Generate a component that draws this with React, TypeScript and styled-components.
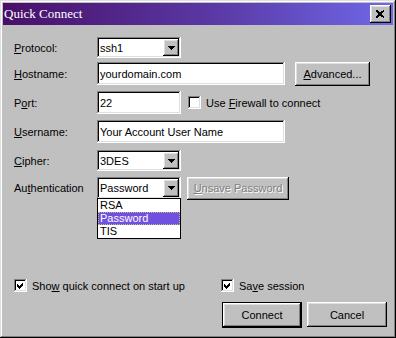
import React from 'react';
import styled, { css, createGlobalStyle } from 'styled-components';

const GlobalStyle = createGlobalStyle`
  body {
    margin: 0;
    background: #c0c0c0;
  }
`;

const raised = css`
  box-shadow: inset -1px -1px #000, inset 1px 1px #fff, inset -2px -2px #808080, inset 2px 2px #dfdfdf;
`;

const sunken = css`
  box-shadow: inset -1px -1px #fff, inset 1px 1px #808080, inset -2px -2px #dfdfdf, inset 2px 2px #000;
`;

function Check() {
  return (
    <svg width="13" height="13" viewBox="0 0 13 13" shapeRendering="crispEdges">
      <polygon points="3,5 5,7 9,3 9,6 5,10 3,8" fill="#000" />
    </svg>
  );
}

function Arrow() {
  return (
    <svg width="7" height="4" viewBox="0 0 7 4" shapeRendering="crispEdges">
      <polygon points="0,0 7,0 3.5,4" fill="#000" />
    </svg>
  );
}

function Select({ value, children }: { value: string; children?: React.ReactNode }) {
  return (
    <SelectBox>
      <span>{value}</span>
      <ArrowBtn>
        <Arrow />
      </ArrowBtn>
      {children}
    </SelectBox>
  );
}

function CheckBox({ checked, children }: { checked?: boolean; children: React.ReactNode }) {
  return (
    <CheckLabel>
      <Box>{checked && <Check />}</Box>
      <span>{children}</span>
    </CheckLabel>
  );
}

function App() {
  return (
    <>
      <GlobalStyle />
      <Window>
        <TitleBar>
          <span>Quick Connect</span>
          <CloseBtn>
            <svg width="9" height="8" viewBox="0 0 9 8" shapeRendering="crispEdges">
              <path d="M0.5 0.5 L8 7.5 M8 0.5 L0.5 7.5" stroke="#000" strokeWidth="2" />
            </svg>
          </CloseBtn>
        </TitleBar>

        <Body>
          <Row $h={21} $mt={12}>
            <Label><U>P</U>rotocol:</Label>
            <Select value="ssh1" />
          </Row>
          <Row $h={23} $mt={4}>
            <Label><U>H</U>ostname:</Label>
            <Field $w={188}>yourdomain.com</Field>
            <Button $w={75} $h={24} $ml={10}><U>A</U>dvanced...</Button>
          </Row>
          <Row $h={23} $mt={6}>
            <Label>P<U>o</U>rt:</Label>
            <Field $w={84}>22</Field>
            <Spacer $w={7} />
            <CheckBox>Use <U>F</U>irewall to connect</CheckBox>
          </Row>
          <Row $h={23} $mt={6}>
            <Label><U>U</U>sername:</Label>
            <Field $w={188}>Your Account User Name</Field>
          </Row>
          <Row $h={21} $mt={7}>
            <Label><U>C</U>ipher:</Label>
            <Select value="3DES" />
          </Row>
          <Row $h={22} $mt={6}>
            <Label>Au<U>t</U>hentication</Label>
            <Select value="Password">
              <List>
                <Item>RSA</Item>
                <Item $active>Password</Item>
                <Item>TIS</Item>
              </List>
            </Select>
            <Button $w={102} $h={23} $ml={6} disabled>
              <U>U</U>nsave Password
            </Button>
          </Row>

          <Checks>
            <CheckBox checked>Sho<U>w</U> quick connect on start up</CheckBox>
            <CheckBox checked>Sa<U>v</U>e session</CheckBox>
          </Checks>

          <Actions>
            <Button $w={80} $h={26} $default>Connect</Button>
            <Button $w={80} $h={25}>Cancel</Button>
          </Actions>
        </Body>
      </Window>
    </>
  );
}

const Window = styled.div`
  width: 396px;
  height: 338px;
  box-sizing: border-box;
  padding: 3px;
  background: #c0c0c0;
  box-shadow: inset -1px -1px #000, inset 1px 1px #dfdfdf, inset -2px -2px #808080, inset 2px 2px #fff;
  display: flex;
  flex-direction: column;
  font-family: "Liberation Sans", Arial, sans-serif;
  font-size: 11px;
  color: #000;
`;

const TitleBar = styled.div`
  height: 22px;
  flex: none;
  display: flex;
  align-items: center;
  justify-content: space-between;
  padding: 0 2px 0 1px;
  background: linear-gradient(to right, #480f68, #5a3aa6 55%, #7068e8);
  color: #fff;
  font-family: "Liberation Serif", "Times New Roman", serif;
  font-size: 13px;
`;

const CloseBtn = styled.div`
  width: 21px;
  height: 18px;
  display: flex;
  align-items: center;
  justify-content: center;
  background: #c0c0c0;
  ${raised};
`;

const Body = styled.div`
  flex: 1;
  display: flex;
  flex-direction: column;
  padding: 0 6px 0 11px;
`;

const Row = styled.div<{ $h: number; $mt: number }>`
  display: flex;
  align-items: center;
  height: ${({ $h }) => $h}px;
  margin-top: ${({ $mt }) => $mt}px;
`;

const Label = styled.div`
  width: 83px;
  flex: none;
`;

const U = styled.span`
  text-decoration: underline;
`;

const Spacer = styled.div<{ $w: number }>`
  width: ${({ $w }) => $w}px;
  flex: none;
`;

const Field = styled.div<{ $w: number }>`
  width: ${({ $w }) => $w}px;
  height: 100%;
  box-sizing: border-box;
  display: flex;
  align-items: center;
  padding-left: 3px;
  background: #fff;
  ${sunken};
`;

const SelectBox = styled.div`
  position: relative;
  width: 84px;
  height: 100%;
  box-sizing: border-box;
  display: flex;
  align-items: center;
  justify-content: space-between;
  padding: 2px 2px 2px 3px;
  background: #fff;
  ${sunken};
`;

const ArrowBtn = styled.div`
  width: 16px;
  height: 100%;
  display: flex;
  align-items: center;
  justify-content: center;
  background: #c0c0c0;
  ${raised};
`;

const List = styled.div`
  position: absolute;
  top: calc(100% - 1px);
  left: 0;
  width: 84px;
  box-sizing: border-box;
  border: 1px solid #000;
  background: #fff;
  z-index: 2;
`;

const Item = styled.div<{ $active?: boolean }>`
  height: 13px;
  line-height: 13px;
  padding-left: 2px;
  box-sizing: border-box;
  ${({ $active }) =>
    $active &&
    css`
      background: #7050e0;
      color: #fff;
      outline: 1px dotted #c8b878;
      outline-offset: -1px;
    `}
`;

const Button = styled.div<{ $w: number; $h: number; $ml?: number; $default?: boolean; disabled?: boolean }>`
  width: ${({ $w }) => $w}px;
  height: ${({ $h }) => $h}px;
  margin-left: ${({ $ml }) => $ml || 0}px;
  flex: none;
  box-sizing: border-box;
  display: flex;
  align-items: center;
  justify-content: center;
  background: #c0c0c0;
  ${raised};
  ${({ $default }) =>
    $default &&
    css`
      border: 1px solid #000;
    `}
  ${({ disabled }) =>
    disabled &&
    css`
      color: #808080;
      text-shadow: 1px 1px #fff;
    `}
`;

const CheckLabel = styled.div`
  display: flex;
  align-items: center;
  gap: 5px;
  white-space: nowrap;
`;

const Box = styled.div`
  width: 13px;
  height: 13px;
  flex: none;
  box-sizing: border-box;
  background: #fff;
  ${sunken};
`;

const Checks = styled.div`
  display: grid;
  grid-template-columns: 207px auto;
  align-items: center;
  height: 13px;
  margin-top: 80px;
`;

const Actions = styled.div`
  display: flex;
  justify-content: flex-end;
  align-items: flex-start;
  gap: 5px;
  margin-top: 10px;
`;

export default App;
